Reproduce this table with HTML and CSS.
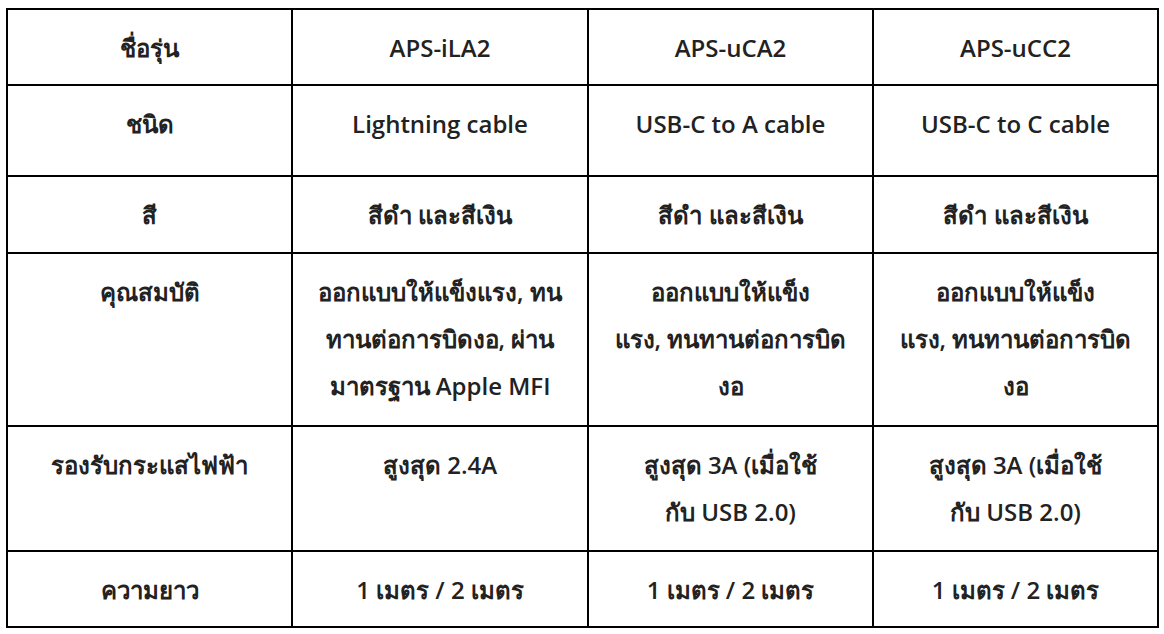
FILE: index.html
```html
<!DOCTYPE html>
<html lang="th">
<head>
<meta charset="utf-8">
<title>Spec table</title>
<link rel="stylesheet" href="styles.css">
</head>
<body>
<div class="spec">
  <div class="cell">ชื่อรุ่น</div>
  <div class="cell">APS-iLA2</div>
  <div class="cell">APS-uCA2</div>
  <div class="cell">APS-uCC2</div>

  <div class="cell">ชนิด</div>
  <div class="cell">Lightning cable</div>
  <div class="cell">USB-C to A cable</div>
  <div class="cell">USB-C to C cable</div>

  <div class="cell">สี</div>
  <div class="cell">สีดำ และสีเงิน</div>
  <div class="cell">สีดำ และสีเงิน</div>
  <div class="cell">สีดำ และสีเงิน</div>

  <div class="cell">คุณสมบัติ</div>
  <div class="cell">ออกแบบให้แข็งแรง, ทน<br>ทานต่อการบิดงอ, ผ่าน<br>มาตรฐาน Apple MFI</div>
  <div class="cell">ออกแบบให้แข็ง<br>แรง, ทนทานต่อการบิด<br>งอ</div>
  <div class="cell">ออกแบบให้แข็ง<br>แรง, ทนทานต่อการบิด<br>งอ</div>

  <div class="cell">รองรับกระแสไฟฟ้า</div>
  <div class="cell">สูงสุด 2.4A</div>
  <div class="cell">สูงสุด 3A (เมื่อใช้<br>กับ USB 2.0)</div>
  <div class="cell">สูงสุด 3A (เมื่อใช้<br>กับ USB 2.0)</div>

  <div class="cell">ความยาว</div>
  <div class="cell">1 เมตร / 2 เมตร</div>
  <div class="cell">1 เมตร / 2 เมตร</div>
  <div class="cell">1 เมตร / 2 เมตร</div>
</div>
</body>
</html>
```
FILE: styles.css
```css
html, body {
  margin: 0;
  padding: 0;
  background: #ffffff;
}

body {
  padding: 8px 0 0 6px;
  font-family: "Open Sans", "DejaVu Sans", sans-serif;
  font-size: 24px;
  font-weight: 600;
  color: #222222;
}

.spec {
  display: grid;
  grid-template-columns: 285px 296px 285px 285px;
  grid-template-rows: 76px 91px 77px 173px 125px 76px;
  width: max-content;
  border-left: 2px solid #000;
  border-top: 2px solid #000;
}

.cell {
  box-sizing: border-box;
  border-right: 2px solid #000;
  border-bottom: 2px solid #000;
  padding-top: 14px;
  line-height: 47px;
  text-align: center;
  white-space: nowrap;
}
```
